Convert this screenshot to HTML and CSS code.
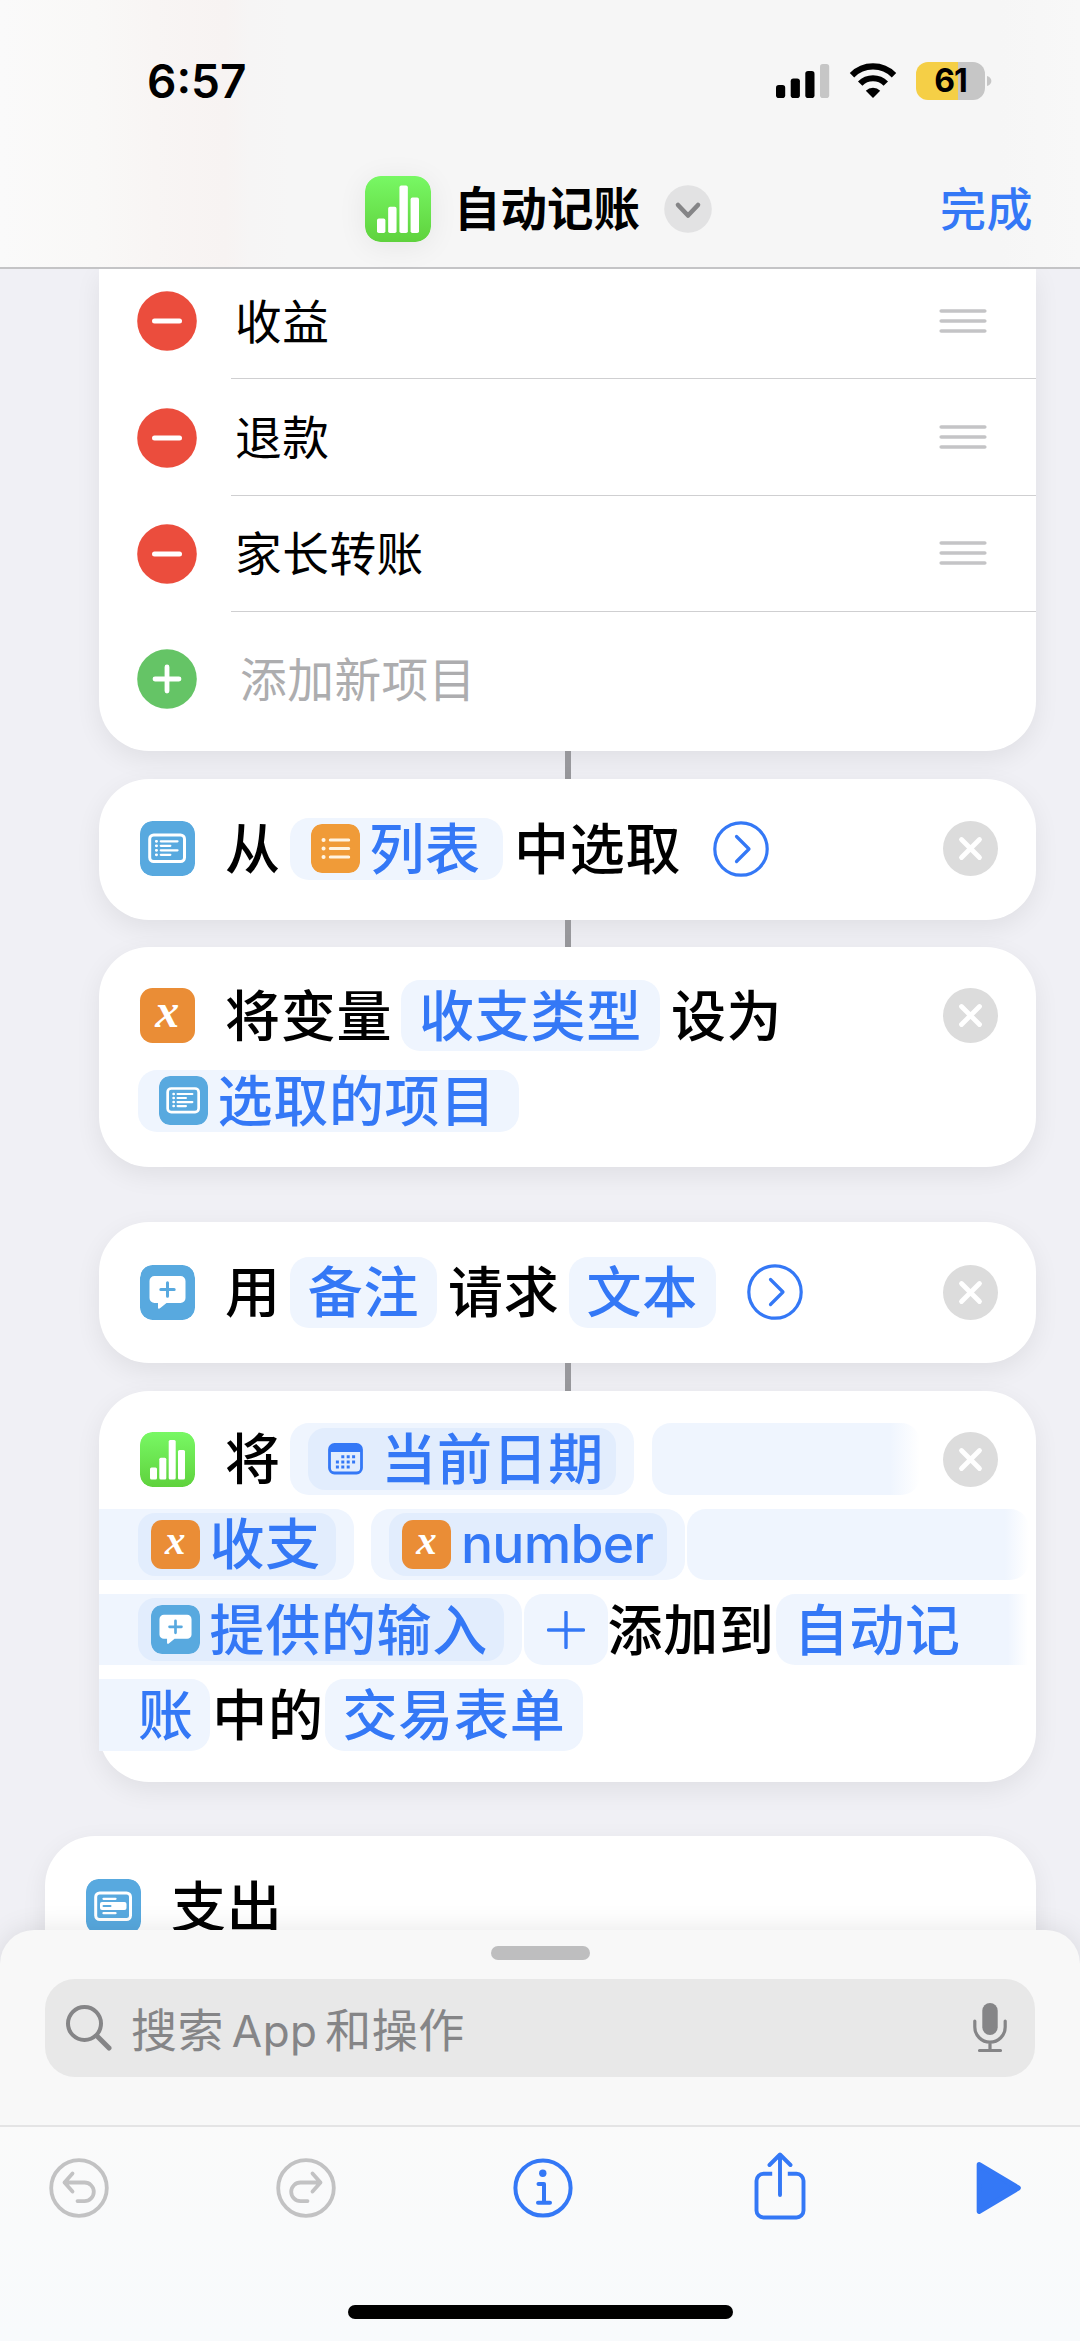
FILE: index.html
```html
<!DOCTYPE html>
<html lang="zh-CN">
<head>
<meta charset="utf-8">
<title>自动记账</title>
<link rel="stylesheet" href="styles.css">
</head>
<body>
<svg class="defs" width="0" height="0" aria-hidden="true">
  <linearGradient id="green" x1="0" y1="0" x2="0" y2="1"><stop offset="0" stop-color="#78f864"/><stop offset="1" stop-color="#5fd23d"/></linearGradient>
  <symbol id="i-numbers" viewBox="0 0 55 55">
    <rect width="55" height="55" rx="12.5" fill="url(#green)"/>
    <g fill="#fff"><rect x="10" y="35.500" width="7" height="12" rx="1.500"/><rect x="19.300" y="25.700" width="7" height="21.800" rx="1.500"/><rect x="28.700" y="8" width="7" height="39.500" rx="1.500"/><rect x="38" y="18" width="7" height="29.500" rx="1.500"/></g>
  </symbol>
  <symbol id="i-choose" viewBox="0 0 55 55">
    <rect width="55" height="55" rx="12.500" fill="#58a9df"/>
    <rect x="9.700" y="14" width="34.800" height="26.500" rx="4" fill="none" stroke="#fff" stroke-width="3"/>
    <g stroke="#fff" stroke-width="2.300" stroke-linecap="round"><path d="M20.800 20.300h16.700M20.800 24.800h9.500M20.800 29.300h16.700M20.800 33.800h9.500"/><path d="M16.300 20.300h.3M16.300 24.800h.3M16.300 29.300h.3M16.300 33.800h.3" stroke-width="2.800"/></g>
  </symbol>
  <symbol id="i-menu" viewBox="0 0 55 55">
    <rect width="55" height="55" rx="12.500" fill="#58a9df"/>
    <rect x="9.700" y="14" width="34.800" height="26.500" rx="4" fill="none" stroke="#fff" stroke-width="3"/>
    <path d="M17.500 19.800h12M17.500 34.200h12" stroke="#fff" stroke-width="2.300" stroke-linecap="round"/>
    <rect x="14" y="23" width="26.500" height="8" rx="2" fill="#fff"/><path d="M17.500 27h7" stroke="#58a9df" stroke-width="2" stroke-linecap="round"/>
  </symbol>
  <symbol id="i-list" viewBox="0 0 49 49">
    <rect width="49" height="49" rx="11" fill="#f09b38"/>
    <g stroke="#fff4e2" stroke-width="3" stroke-linecap="round"><path d="M19.300 16h18.400M19.300 24.500h18.400M19.300 33h18.400"/><path d="M12.500 16h.1M12.500 24.500h.1M12.500 33h.1" stroke-width="4"/></g>
  </symbol>
  <symbol id="i-ask" viewBox="0 0 55 55">
    <rect width="55" height="55" rx="12.500" fill="#58a9df"/>
    <path d="M14.500 11h26a5 5 0 0 1 5 5v17a5 5 0 0 1-5 5H26.500l-6.500 5.300c-1 .8-2 .4-2-.8V38h-3.500a5 5 0 0 1-5-5V16a5 5 0 0 1 5-5z" fill="#fff"/>
    <path d="M27.500 17.800v13.400M20.800 24.500h13.400" stroke="#58a9df" stroke-width="3" stroke-linecap="round"/>
  </symbol>
  <symbol id="i-calendar" viewBox="0 0 35 32">
    <rect x="1.500" y="1.500" width="32" height="28.500" rx="5" fill="none" stroke="#3478f6" stroke-width="2.800"/>
    <path d="M1 9V6a5 5 0 0 1 5-5h23a5 5 0 0 1 5 5v3z" fill="#3478f6"/>
    <g fill="#3478f6"><path d="M13.300 12.200h3v3h-3zM18.700 12.200h3v3h-3zM24.100 12.200h3v3h-3zM7.900 17.400h3v3h-3zM13.300 17.400h3v3h-3zM18.700 17.400h3v3h-3zM24.100 17.400h3v3h-3zM7.900 22.500h3v3h-3zM13.300 22.500h3v3h-3zM18.700 22.500h3v3h-3z"/></g>
  </symbol>
  <symbol id="i-more" viewBox="0 0 56 56">
    <circle cx="28" cy="28" r="26.200" fill="none" stroke="#3478f6" stroke-width="3.200"/>
    <path d="M23.500 15.500 36 28 23.500 40.500" fill="none" stroke="#3478f6" stroke-width="3.200" stroke-linecap="round" stroke-linejoin="round"/>
  </symbol>
  <symbol id="i-close" viewBox="0 0 55 55">
    <circle cx="27.500" cy="27.500" r="27.500" fill="#dcdcdc"/>
    <path d="M18.500 18.500l18 18M36.500 18.500l-18 18" stroke="#fff" stroke-width="4.800" stroke-linecap="round"/>
  </symbol>
  <symbol id="i-minus" viewBox="0 0 60 60">
    <circle cx="30" cy="30" r="29.800" fill="#eb4d3d"/><path d="M17.500 30h25" stroke="#fff" stroke-width="5" stroke-linecap="round"/>
  </symbol>
  <symbol id="i-plus" viewBox="0 0 60 60">
    <circle cx="30" cy="30" r="29.800" fill="#65c466"/><path d="M18 30h24M30 18v24" stroke="#fff" stroke-width="4.800" stroke-linecap="round"/>
  </symbol>
  <symbol id="i-grip" viewBox="0 0 48 24">
    <path d="M2.200 2h43.600M2.200 12h43.600M2.200 22h43.600" stroke="#c4c4c6" stroke-width="3.600" stroke-linecap="round"/>
  </symbol>
</svg>

<header class="header">
  <div class="status">
    <div class="time">6:57</div>
    <div class="status-icons">
      <svg class="signal" viewBox="0 0 54 36"><rect x="0" y="22" width="9.200" height="13" rx="2.800"/><rect x="14.700" y="15.500" width="9.200" height="19.500" rx="2.800"/><rect x="29.300" y="8" width="9.200" height="27" rx="2.800"/><rect x="44" y="1" width="9.200" height="34" rx="2.800" fill="#c6c6c6"/></svg>
      <svg class="wifi" viewBox="0 0 48 36"><g fill="none" stroke="#000" stroke-width="6.200"><path d="M3 12.200a29.500 29.500 0 0 1 42 0"/><path d="M11.200 20.600a18 18 0 0 1 25.600 0"/></g><path d="M24 35l-7.200-7.300a10.200 10.200 0 0 1 14.400 0z"/></svg>
      <div class="battery"><span class="level">61</span><svg viewBox="0 0 6 12"><path d="M0 0c7 2 7 10 0 12z" fill="#c6c6c6"/></svg></div>
    </div>
  </div>
  <div class="titlebar">
    <svg class="app-icon"><use href="#i-numbers"/></svg>
    <h1 class="title">自动记账</h1>
    <svg class="title-more" viewBox="0 0 48 48"><circle cx="24" cy="24" r="23.800" fill="#e2e2e3"/><path d="M14 20l10 10.500L34 20" fill="none" stroke="#858587" stroke-width="4.600" stroke-linecap="round" stroke-linejoin="round"/></svg>
    <a class="done">完成</a>
  </div>
</header>

<main class="canvas">
  <section class="card list-card">
    <div class="item"><svg class="round"><use href="#i-minus"/></svg><div class="item-body"><span>收益</span><svg class="grip"><use href="#i-grip"/></svg></div></div>
    <div class="item"><svg class="round"><use href="#i-minus"/></svg><div class="item-body"><span>退款</span><svg class="grip"><use href="#i-grip"/></svg></div></div>
    <div class="item"><svg class="round"><use href="#i-minus"/></svg><div class="item-body"><span>家长转账</span><svg class="grip"><use href="#i-grip"/></svg></div></div>
    <div class="item add"><svg class="round"><use href="#i-plus"/></svg><div class="item-body"><span>添加新项目</span></div></div>
  </section>
  <div class="link"></div>

  <section class="card action">
    <div class="line">
      <svg class="icon"><use href="#i-choose"/></svg><span class="word first">从</span>
      <span class="token with-icon"><svg class="mini"><use href="#i-list"/></svg><b>列表</b></span>
      <span class="word">中选取</span><svg class="more"><use href="#i-more"/></svg><svg class="close"><use href="#i-close"/></svg>
    </div>
  </section>
  <div class="link"></div>

  <section class="card action multi">
    <div class="line">
      <span class="icon var">x</span><span class="word first">将变量</span>
      <span class="token"><b>收支类型</b></span>
      <span class="word">设为</span><svg class="close"><use href="#i-close"/></svg>
    </div>
    <div class="line">
      <span class="token with-icon lead"><svg class="mini"><use href="#i-choose"/></svg><b>选取的项目</b></span>
    </div>
  </section>

  <section class="card action spaced">
    <div class="line">
      <svg class="icon"><use href="#i-ask"/></svg><span class="word first">用</span>
      <span class="token"><b>备注</b></span>
      <span class="word">请求</span>
      <span class="token"><b>文本</b></span><svg class="more"><use href="#i-more"/></svg><svg class="close"><use href="#i-close"/></svg>
    </div>
  </section>
  <div class="link"></div>

  <section class="card action multi">
    <div class="line">
      <svg class="icon"><use href="#i-numbers"/></svg><span class="word first">将</span>
      <span class="token outer"><span class="inner date"><svg class="calendar"><use href="#i-calendar"/></svg><b>当前日期</b></span></span>
      <span class="token blank short"></span><svg class="close"><use href="#i-close"/></svg>
    </div>
    <div class="line bleed">
      <span class="token outer from-edge"><span class="inner"><span class="mini var">x</span><b>收支</b></span></span>
      <span class="token outer second"><span class="inner number"><span class="mini var">x</span><b>number</b></span></span>
      <span class="token blank long"></span>
    </div>
    <div class="line bleed">
      <span class="token outer from-edge"><span class="inner"><svg class="mini"><use href="#i-ask"/></svg><b>提供的输入</b></span></span>
      <span class="token plus"><svg viewBox="0 0 40 40"><path d="M20 1.500v37M1.500 20h37" stroke="#3478f6" stroke-width="3.600" stroke-linecap="round"/></svg></span>
      <span class="word tight">添加到</span>
      <span class="token to-edge"><b>自动记</b></span>
    </div>
    <div class="line bleed">
      <span class="token tail"><b>账</b></span>
      <span class="word tight">中的</span>
      <span class="token"><b>交易表单</b></span>
    </div>
  </section>

  <section class="card action spaced wide">
    <div class="line"><svg class="icon"><use href="#i-menu"/></svg><span class="word first">支出</span></div>
  </section>
</main>

<section class="sheet">
  <div class="grabber"></div>
  <div class="search">
    <svg class="glass" viewBox="0 0 46 46"><circle cx="18.500" cy="18.500" r="16.500" fill="none" stroke="#858587" stroke-width="4"/><path d="M31 31l12 12" stroke="#858587" stroke-width="5" stroke-linecap="round"/></svg>
    <span class="placeholder">搜索 <i>App</i> 和操作</span>
    <svg class="mic" viewBox="0 0 34 50"><rect x="9.300" y="0" width="15.400" height="32" rx="7.700" fill="#858587"/><path d="M1.800 18v6a15.200 15.200 0 0 0 30.400 0v-6M17 39.500V47M6.500 47.500h21" fill="none" stroke="#858587" stroke-width="3.200" stroke-linecap="round"/></svg>
  </div>
</section>

<footer class="toolbar">
  <div class="tools">
    <svg class="tool" viewBox="0 0 60 62"><g fill="none" stroke="#c2c2c3" stroke-width="3.800" stroke-linecap="round" stroke-linejoin="round"><circle cx="30" cy="31" r="27.800"/><path d="M23.500 16.500l-8 9 8 9M15.500 25.500h20a9.300 9.300 0 0 1 0 18.600h-7"/></g></svg>
    <svg class="tool" viewBox="0 0 60 62"><g fill="none" stroke="#c2c2c3" stroke-width="3.800" stroke-linecap="round" stroke-linejoin="round"><circle cx="30" cy="31" r="27.800"/><path d="M36.500 16.500l8 9-8 9M44.500 25.500h-20a9.300 9.300 0 0 0 0 18.600h7"/></g></svg>
    <svg class="tool info" viewBox="0 0 60 62"><g fill="none" stroke="#3478f6" stroke-width="4" stroke-linecap="round" stroke-linejoin="round"><circle cx="30" cy="31" r="27.600"/><path d="M25.500 27h5.500v18.800M25 45.800h12"/></g><circle cx="29.800" cy="16.300" r="3.700" fill="#3478f6"/></svg>
    <svg class="share" viewBox="0 0 52 68"><g fill="none" stroke="#3478f6" stroke-width="3.900" stroke-linecap="round" stroke-linejoin="round"><path d="M18.200 21.800H9.500a7 7 0 0 0-7 7v29.700a7 7 0 0 0 7 7h33a7 7 0 0 0 7-7V28.800a7 7 0 0 0-7-7h-8.700" stroke-linecap="butt"/><path d="M26 43V3M15.500 13 26 2.500 36.500 13"/></g></svg>
    <svg class="play" viewBox="0 0 45 52"><path d="M3.500 3.500 41 26 3.500 48.500z" fill="#3478f6" stroke="#3478f6" stroke-width="5" stroke-linejoin="round"/></svg>
  </div>
  <div class="home"></div>
</footer>
</body>
</html>
```
FILE: styles.css
```css
* { box-sizing: border-box; }

body {
  margin: 0;
  width: 1080px;
  height: 2341px;
  display: flex;
  flex-direction: column;
  overflow: hidden;
  background: #f0f0f5;
  color: #000;
  font-family: "Noto Sans CJK SC", "Inter", sans-serif;
}

svg { display: block; flex: none; }
.defs { position: absolute; }

/* header */
.header {
  position: relative;
  z-index: 2;
  flex: none;
  height: 269px;
  display: flex;
  flex-direction: column;
  border-bottom: 2px solid #c4c4c6;
  background: linear-gradient(90deg, #fafafa 0, #f9f8f7 95px, #f8f5f4 155px, #f7f3f2 225px, #f6f5f5 250px, #f6f6f6 290px, #f6f6f6 1000px, #f8f8f8 1080px);
}
.status {
  height: 160px;
  padding: 0 88px 0 147px;
  display: flex;
  justify-content: space-between;
  align-items: center;
}
.time { font: 600 46px/60px "Inter", sans-serif; padding-top: 1px; }
.status-icons { display: flex; align-items: center; padding-top: 1px; }
.signal { width: 54px; height: 36px; margin-right: 19px; }
.wifi { width: 48px; height: 36px; margin-right: 19px; }
.battery { display: flex; align-items: center; gap: 2px; }
.battery svg { width: 5px; height: 12px; }
.level {
  width: 69px;
  height: 38px;
  border-radius: 12px;
  background: linear-gradient(90deg, #f5cf46 42.500px, #c6c6c6 42.500px);
  font: 700 32px/38px "Inter", sans-serif;
  letter-spacing: -1px;
  text-align: center;
}
.titlebar {
  height: 97px;
  padding: 0 47px 0 365px;
  display: flex;
  align-items: center;
}
.app-icon { width: 66px; height: 66px; border-radius: 16px; box-shadow: 0 4px 30px rgba(0, 0, 0, .07); }
.title { margin: 0 0 0 23px; width: 187px; font-size: 46.500px; font-weight: 700; line-height: 60px; padding-bottom: 5px; white-space: nowrap; }
.title-more { width: 48px; height: 48px; margin-left: 23px; }
.done { margin-left: auto; color: #3478f6; font-size: 46px; font-weight: 500; line-height: 60px; padding-bottom: 6px; letter-spacing: .5px; }

/* canvas */
.canvas {
  flex: none;
  height: 1697px;
  padding: 0 44px 0 99px;
  display: flex;
  flex-direction: column;
  overflow: hidden;
}
.card {
  flex: none;
  background: #fff;
  border-radius: 50px;
  box-shadow: 0 8px 26px rgba(0, 0, 0, .07);
}
.list-card { height: 482px; border-radius: 0 0 50px 50px; }
.item { height: 116.400px; padding-left: 37.500px; display: flex; align-items: center; }
.item:first-child { margin-top: -6px; }
.round { width: 60px; height: 60px; }
.item-body {
  flex: 1;
  height: 100%;
  margin-left: 34.500px;
  padding: 0 49px 0 4px;
  display: flex;
  align-items: center;
  justify-content: space-between;
  border-bottom: 1.500px solid #cfcfd1;
  font-size: 46.700px;
  line-height: 60px;
  letter-spacing: .5px;
}
.item-body span { padding-bottom: 4px; }
.grip { width: 48px; height: 24px; }
.item.add { height: 134px; }
.item.add .item-body { border: 0; padding-left: 9px; color: #adadaf; }
.link { flex: none; width: 6px; height: 27.800px; margin-left: 466px; background: #98989c; }
.spaced { margin-top: 54.800px; }
.wide { margin-left: -54px; height: 180px; }

/* action cards */
.action { padding: 34.500px 0 35px; display: flex; flex-direction: column; gap: 14px; }
.multi { padding: 32.500px 0 31px; }
.line { height: 71.300px; padding: 0 38px 0 41px; display: flex; align-items: center; font-size: 55px; font-weight: 500; line-height: 71px; letter-spacing: .7px; white-space: nowrap; }
.icon { width: 55px; height: 55px; border-radius: 12.500px; }
.var {
  flex: none;
  background: #ea8d36;
  color: #fff;
  font: italic 700 48px/46px "Liberation Serif", serif;
  text-align: center;
}
.word { padding: 0 9px 7px 11px; }
.word.first { padding-left: 30px; }
.token {
  height: 71.300px;
  padding: 0 18px;
  display: flex;
  align-items: center;
  border-radius: 19px;
  background: #eff5fe;
  color: #3478f6;
}
.token b { font-weight: 500; padding-bottom: 7px; }
.with-icon { height: 62.500px; padding: 0 22.500px 0 21px; }
.mini { width: 49px; height: 49px; border-radius: 11px; margin-right: 9.500px; }
.mini.var { font-size: 41px; line-height: 41px; }
.more { width: 56px; height: 56px; margin-left: 31.500px; }
.word + .more { margin-left: 22.500px; }
.close { width: 55px; height: 55px; margin-left: auto; }
.lead { margin-left: -2px; }
.outer { padding: 0 18px; }
.inner { height: 62.500px; padding: 0 15.500px 0 13px; display: flex; align-items: center; border-radius: 17px; background: #e2edfd; }
.inner.date { padding: 0 12px 0 20.500px; }
.calendar { width: 35px; height: 32px; margin-right: 18px; }
.blank { height: 71.300px; }
.short { width: 268px; margin-left: 18px; background: linear-gradient(90deg, #eff5fe 238px, #fff 268px); }
.bleed { padding: 0; }
.from-edge { border-radius: 0 19px 19px 0; padding-left: 39px; }
.second { margin-left: 17px; }
.inner.number { padding-right: 14px; }
.number b { font-family: "Inter", sans-serif; font-size: 53.500px; letter-spacing: -0.800px; padding-bottom: 2px; }
.long { width: 342px; margin-left: 2px; background: linear-gradient(90deg, #eff5fe 318px, #fff 342px); }
.plus { width: 84px; margin-left: 2px; justify-content: center; }
.plus svg { width: 38px; height: 38px; }
.word.tight { padding: 0 1px 7px 0; }
.to-edge { flex: 1; padding-left: 18px; border-radius: 19px 0 0 19px; margin-right: 8px; background: linear-gradient(90deg, #eff5fe 232px, #fff 100%); }
.tail { padding: 0 16.500px 0 39px; border-radius: 0 19px 19px 0; margin-right: 2px; }

/* search sheet */
.sheet {
  position: relative;
  z-index: 1;
  flex: none;
  height: 197px;
  margin-top: -36px;
  padding: 16px 45px 0;
  display: flex;
  flex-direction: column;
  align-items: center;
  border-radius: 34px 34px 0 0;
  border-bottom: 2px solid #e4e4e5;
  background: #f8f8f8;
  box-shadow: 0 0 28px rgba(0, 0, 0, .1);
}
.grabber { width: 99px; height: 14px; border-radius: 7px; background: #bebebf; }
.search {
  align-self: stretch;
  height: 98px;
  margin-top: 19px;
  padding: 0 28px 0 21px;
  display: flex;
  align-items: center;
  border-radius: 30px;
  background: #e8e8e8;
  color: #858587;
  font-size: 46px;
  line-height: 60px;
}
.glass { width: 46px; height: 46px; }
.placeholder { margin-left: 19px; padding-bottom: 3px; white-space: nowrap; letter-spacing: .5px; word-spacing: -3px; }
.placeholder i { font: 400 44px/1 "Inter", sans-serif; }
.mic { width: 34px; height: 50px; margin-left: auto; }

/* toolbar */
.toolbar {
  position: relative;
  z-index: 2;
  flex: 1;
  display: flex;
  flex-direction: column;
  align-items: center;
  justify-content: space-between;
  padding-bottom: 22px;
  background: linear-gradient(180deg, #fafafa, #f8fafc);
}
.tools { align-self: stretch; height: 120px; padding: 2px 56px 0 49px; display: flex; align-items: center; }
.tool { width: 60px; height: 62px; margin-right: 167px; }
.tool + .tool { margin-right: 177px; }
.tool.info { margin-right: 181px !important; }
.share { width: 52px; height: 68px; margin-right: 169px; margin-bottom: 4px; }
.play { width: 48px; height: 54px; }
.home { width: 385px; height: 14px; border-radius: 7px; background: #000; }
```
